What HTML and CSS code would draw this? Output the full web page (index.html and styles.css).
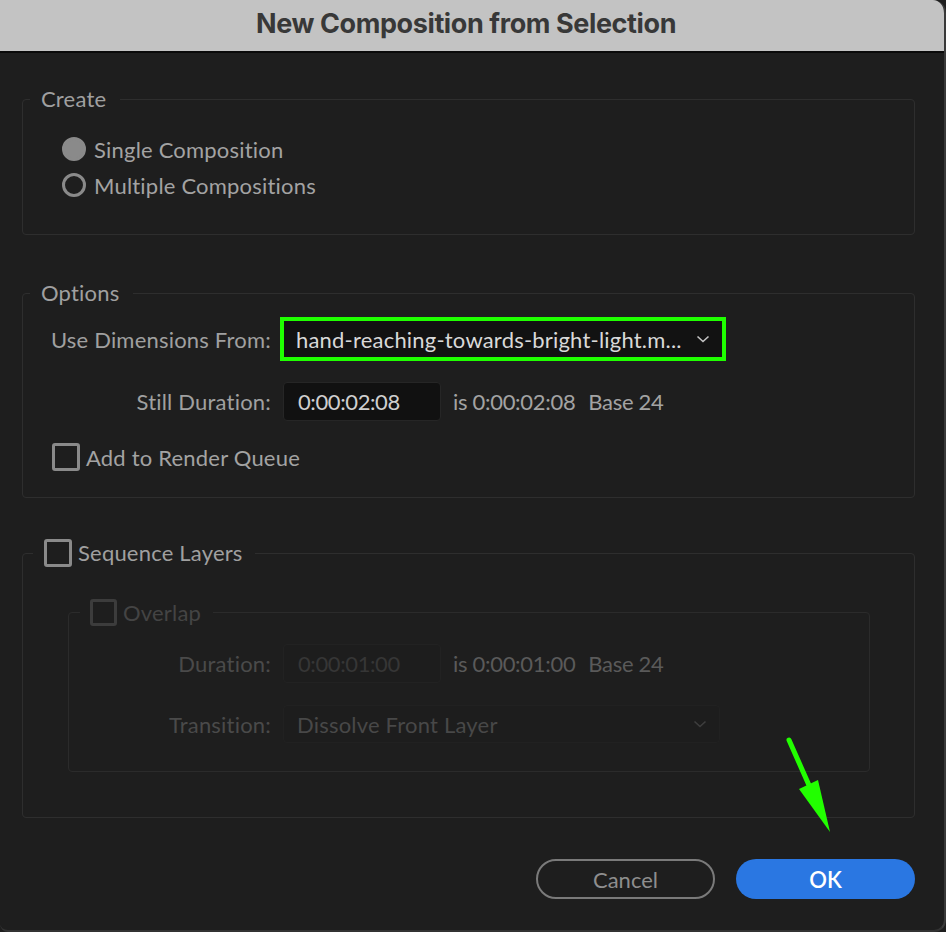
FILE: index.html
```html
<!DOCTYPE html>
<html>
<head>
<meta charset="utf-8">
<link rel="stylesheet" href="styles.css">
</head>
<body>
<div class="window">
  <div class="titlebar">New Composition from Selection</div>
  <div class="content">
    <fieldset class="group create">
      <legend class="legend">Create</legend>
      <div class="radio-row"><span class="radio checked"></span><span>Single Composition</span></div>
      <div class="radio-row"><span class="radio"></span><span>Multiple Compositions</span></div>
    </fieldset>

    <fieldset class="group options">
      <legend class="legend">Options</legend>
      <div class="form-grid">
        <label class="label">Use Dimensions From:</label>
        <div class="dropdown highlight">
          <span class="dd-text">hand-reaching-towards-bright-light.m...</span>
          <svg class="chev" width="14" height="8" viewBox="0 0 14 8"><path d="M1.5 1.5 L7 6.5 L12.5 1.5" fill="none" stroke="currentColor" stroke-width="1.6"/></svg>
        </div>
        <label class="label">Still Duration:</label>
        <div class="field-row">
          <div class="input">0:00:02:08</div>
          <span class="info">is 0:00:02:08</span><span class="info">Base 24</span>
        </div>
      </div>
      <div class="check-row render"><span class="checkbox"></span><span>Add to Render Queue</span></div>
    </fieldset>

    <fieldset class="group sequence">
      <legend class="legend check-legend"><span class="checkbox"></span><span>Sequence Layers</span></legend>
      <fieldset class="group overlap disabled">
        <legend class="legend check-legend small"><span class="checkbox"></span><span>Overlap</span></legend>
        <div class="form-grid inner">
          <label class="label">Duration:</label>
          <div class="field-row">
            <div class="input">0:00:01:00</div>
            <span class="info">is 0:00:01:00</span><span class="info">Base 24</span>
          </div>
          <label class="label">Transition:</label>
          <div class="dropdown plain">
            <span class="dd-text">Dissolve Front Layer</span>
            <svg class="chev" width="14" height="8" viewBox="0 0 14 8"><path d="M1.5 1.5 L7 6.5 L12.5 1.5" fill="none" stroke="currentColor" stroke-width="1.6"/></svg>
          </div>
        </div>
      </fieldset>
    </fieldset>

    <div class="buttons">
      <button class="btn cancel">Cancel</button>
      <button class="btn ok">OK</button>
    </div>
  </div>
  <svg class="arrow" width="946" height="932" viewBox="0 0 946 932">
    <line x1="789" y1="740" x2="812" y2="792" stroke="#22ff00" stroke-width="5" stroke-linecap="round"/>
    <polygon points="799,789 818,780 830,832" fill="#22ff00"/>
  </svg>
</div>
</body>
</html>
```

FILE: styles.css
```css
* { box-sizing: border-box; }
html, body { margin: 0; padding: 0; background: #1e1e1e; }
body { width: 946px; height: 932px; overflow: hidden; font-family: Lato, "Open Sans", sans-serif; }

.window {
  position: relative;
  width: 946px;
  height: 932px;
  background: #1e1e1e;
  border-right: 2px solid #3a3a3a;
  border-bottom: 2px solid #333;
  border-radius: 0 13px 12px 8px;
  overflow: hidden;
}

.titlebar {
  height: 53px;
  background: #c3c3c3;
  border-bottom: 2px solid #0a0a0a;
  color: #383838;
  font-family: Inter, "Liberation Sans", sans-serif;
  font-weight: 700;
  font-size: 27px;
  letter-spacing: -0.4px;
  display: flex;
  align-items: center;
  justify-content: center;
  padding-bottom: 4px;
  padding-right: 12px;
}

.content {
  padding: 34px 29px 0 22px;
  color: #a3a3a3;
  font-size: 22px;
  letter-spacing: 0.2px;
}

.group {
  margin: 0;
  padding: 0;
  border: 1px solid #2e2e2e;
  border-radius: 4px;
  min-width: 0;
}

.legend {
  margin-left: 7px;
  padding: 0 14px 0 11px;
  line-height: 24px;
  font-size: 22px;
  color: #a0a0a0;
}

/* Create */
.create { padding: 20px 0 31px 0; }
.radio-row {
  display: flex;
  align-items: center;
  height: 36px;
  padding-left: 39px;
  gap: 8px;
}
.radio {
  width: 24px;
  height: 24px;
  border-radius: 50%;
  border: 3px solid #8a8a8a;
  flex: none;
}
.radio.checked { background: #8a8a8a; }

/* Options */
.options { margin-top: 46px; padding: 12px 0 26px 0; }
.form-grid {
  display: grid;
  grid-template-columns: 248px auto;
  column-gap: 12px;
  row-gap: 21px;
  align-items: center;
}
.label { text-align: right; color: #a0a0a0; white-space: nowrap; }

.dropdown {
  display: flex;
  align-items: center;
  justify-content: space-between;
  background: #121212;
  color: #d9d9d9;
  height: 44px;
}
.dropdown.highlight {
  width: 446px;
  margin-left: -3px;
  border: 4px solid #1fff00;
  padding: 0 12px 0 12px;
}
.dd-text { white-space: nowrap; }
.chev { color: #c4c4c4; display: block; flex: none; }

.field-row { display: flex; align-items: center; }
.input {
  width: 158px;
  height: 39px;
  background: #111;
  border: 1px solid #262626;
  border-radius: 4px;
  color: #cfcfcf;
  padding-left: 14px;
  display: flex;
  align-items: center;
  letter-spacing: -0.4px;
}
.info { color: #a3a3a3; margin-left: 12px; letter-spacing: -0.3px; }
.info + .info { margin-left: 13px; }

.check-row {
  display: flex;
  align-items: center;
  gap: 6px;
}
.render { padding-left: 29px; margin-top: 22px; }
.checkbox {
  width: 28px;
  height: 28px;
  border: 3px solid #8a8a8a;
  border-radius: 3px;
  flex: none;
}

/* Sequence */
.sequence { margin-top: 41px; padding: 0; }
.check-legend {
  display: flex;
  align-items: center;
  gap: 6px;
  line-height: 28px;
  margin-left: 10px;
  padding: 0 12px 0 11px;
}
.check-legend.small {
  margin-left: 11px;
  padding: 0 12px 0 10px;
  line-height: 27px;
}
.check-legend.small .checkbox { width: 27px; height: 27px; }

.overlap { border-color: #2b2b2b; padding: 18px 0 28px 0; margin: 32px 44px 45px 45px; }
.disabled .legend { color: #444; }
.disabled .checkbox { border-color: #3c3c3c; }
.disabled .label { color: #4a4a4a; }
.form-grid.inner { grid-template-columns: 202px auto; row-gap: 22px; }
.disabled .input {
  background: #1d1d1d;
  border-color: #222;
  color: #363636;
}
.disabled .info { color: #5a5a5a; }
.dropdown.plain {
  width: 437px;
  height: 38px;
  background: #1d1d1d;
  border: 1px solid #212121;
  border-radius: 4px;
  padding: 0 12px 0 13px;
  color: #484848;
}
.disabled .chev { color: #3e3e3e; }

/* Buttons */
.buttons {
  display: flex;
  justify-content: flex-end;
  gap: 21px;
  margin-top: 41px;
}
.btn {
  width: 179px;
  height: 40px;
  border-radius: 20px;
  font-family: Lato, "Open Sans", sans-serif;
  font-size: 22px;
  padding: 0;
}
.cancel {
  background: transparent;
  border: 2px solid #7a7a7a;
  color: #8e8e8e;
}
.ok {
  background: #2a77e2;
  border: none;
  color: #fff;
  font-weight: 600;
}

.arrow { position: absolute; left: 0; top: 0; pointer-events: none; }
```
